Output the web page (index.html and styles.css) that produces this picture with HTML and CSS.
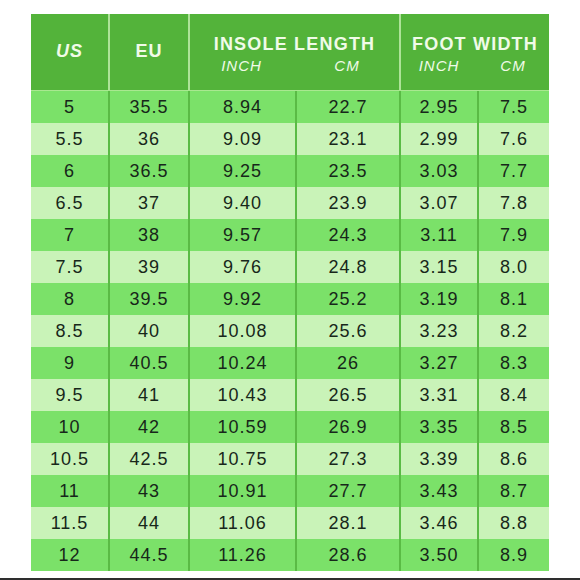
FILE: index.html
```html
<!DOCTYPE html>
<html>
<head>
<meta charset="utf-8">
<link rel="stylesheet" href="styles.css">
</head>
<body>
<div class="page">
  <div class="chart">
    <div class="head">
      <div class="h-cell h-main h-span2 italic">US</div>
      <div class="h-cell h-main h-span2 divl">EU</div>
      <div class="h-group divl">
        <div class="h-title">INSOLE LENGTH</div>
        <div class="h-subs"><span>INCH</span><span>CM</span></div>
      </div>
      <div class="h-group g2 divl">
        <div class="h-title">FOOT WIDTH</div>
        <div class="h-subs"><span>INCH</span><span>CM</span></div>
      </div>
    </div>
    <div class="body" id="body">
      <div class="row dark"><span>5</span><span>35.5</span><span>8.94</span><span>22.7</span><span>2.95</span><span>7.5</span></div>
      <div class="row light"><span>5.5</span><span>36</span><span>9.09</span><span>23.1</span><span>2.99</span><span>7.6</span></div>
      <div class="row dark"><span>6</span><span>36.5</span><span>9.25</span><span>23.5</span><span>3.03</span><span>7.7</span></div>
      <div class="row light"><span>6.5</span><span>37</span><span>9.40</span><span>23.9</span><span>3.07</span><span>7.8</span></div>
      <div class="row dark"><span>7</span><span>38</span><span>9.57</span><span>24.3</span><span>3.11</span><span>7.9</span></div>
      <div class="row light"><span>7.5</span><span>39</span><span>9.76</span><span>24.8</span><span>3.15</span><span>8.0</span></div>
      <div class="row dark"><span>8</span><span>39.5</span><span>9.92</span><span>25.2</span><span>3.19</span><span>8.1</span></div>
      <div class="row light"><span>8.5</span><span>40</span><span>10.08</span><span>25.6</span><span>3.23</span><span>8.2</span></div>
      <div class="row dark"><span>9</span><span>40.5</span><span>10.24</span><span>26</span><span>3.27</span><span>8.3</span></div>
      <div class="row light"><span>9.5</span><span>41</span><span>10.43</span><span>26.5</span><span>3.31</span><span>8.4</span></div>
      <div class="row dark"><span>10</span><span>42</span><span>10.59</span><span>26.9</span><span>3.35</span><span>8.5</span></div>
      <div class="row light"><span>10.5</span><span>42.5</span><span>10.75</span><span>27.3</span><span>3.39</span><span>8.6</span></div>
      <div class="row dark"><span>11</span><span>43</span><span>10.91</span><span>27.7</span><span>3.43</span><span>8.7</span></div>
      <div class="row light"><span>11.5</span><span>44</span><span>11.06</span><span>28.1</span><span>3.46</span><span>8.8</span></div>
      <div class="row dark"><span>12</span><span>44.5</span><span>11.26</span><span>28.6</span><span>3.50</span><span>8.9</span></div>
    </div>
  </div>
  <div class="spacer"></div>
  <div class="bottom-line"></div>
</div>
</body>
</html>
```
FILE: styles.css
```css
* { box-sizing: border-box; }
html, body { margin: 0; padding: 0; background: #ffffff; }
body { font-family: "Liberation Sans", Arial, sans-serif; }
.page {
  width: 580px;
  height: 580px;
  display: flex;
  flex-direction: column;
  padding-top: 14px;
  overflow: hidden;
}
.chart {
  margin-left: 31px;
  width: 518px;
}
.head {
  display: grid;
  grid-template-columns: 77px 80px 211px 150px;
  height: 76px;
  background: #53b33a;
  color: #f0fbe8;
}
.divl { border-left: 2px solid #aee398; }
.h-cell {
  display: flex;
  align-items: center;
  justify-content: center;
  font-weight: bold;
  font-size: 18px;
  letter-spacing: 1px;
  padding-bottom: 2px;
}
.italic { font-style: italic; }
.h-group {
  display: flex;
  flex-direction: column;
  padding-top: 20px;
}
.h-title {
  text-align: center;
  font-weight: bold;
  font-size: 18px;
  letter-spacing: 1.2px;
  line-height: 20px;
}
.h-subs {
  display: grid;
  grid-template-columns: 105px 104px;
  font-style: italic;
  font-size: 15px;
  letter-spacing: 1px;
  line-height: 18px;
  margin-top: 3px;
}
.g2 .h-subs { grid-template-columns: 76px 72px; }
.h-subs span { text-align: center; }
.h-group:not(.g2) .h-subs span:first-child { padding-right: 2px; }
.body {
  border-top: 1px solid #a9e890;
}
.row {
  display: grid;
  grid-template-columns: 77px 80px 107px 104px 78px 72px;
  height: 32px;
  color: #17271a;
  font-size: 18px;
  letter-spacing: 1px;
}
.row span {
  display: flex;
  align-items: center;
  justify-content: center;
  padding-top: 1px;
}
.row span + span { border-left: 2px solid #5abb45; }
.dark { background: #7be169; }
.light { background: #c9f3b8; }
.spacer { flex: 1; }
.bottom-line {
  height: 2px;
  background: #2e2e2e;
}
```
